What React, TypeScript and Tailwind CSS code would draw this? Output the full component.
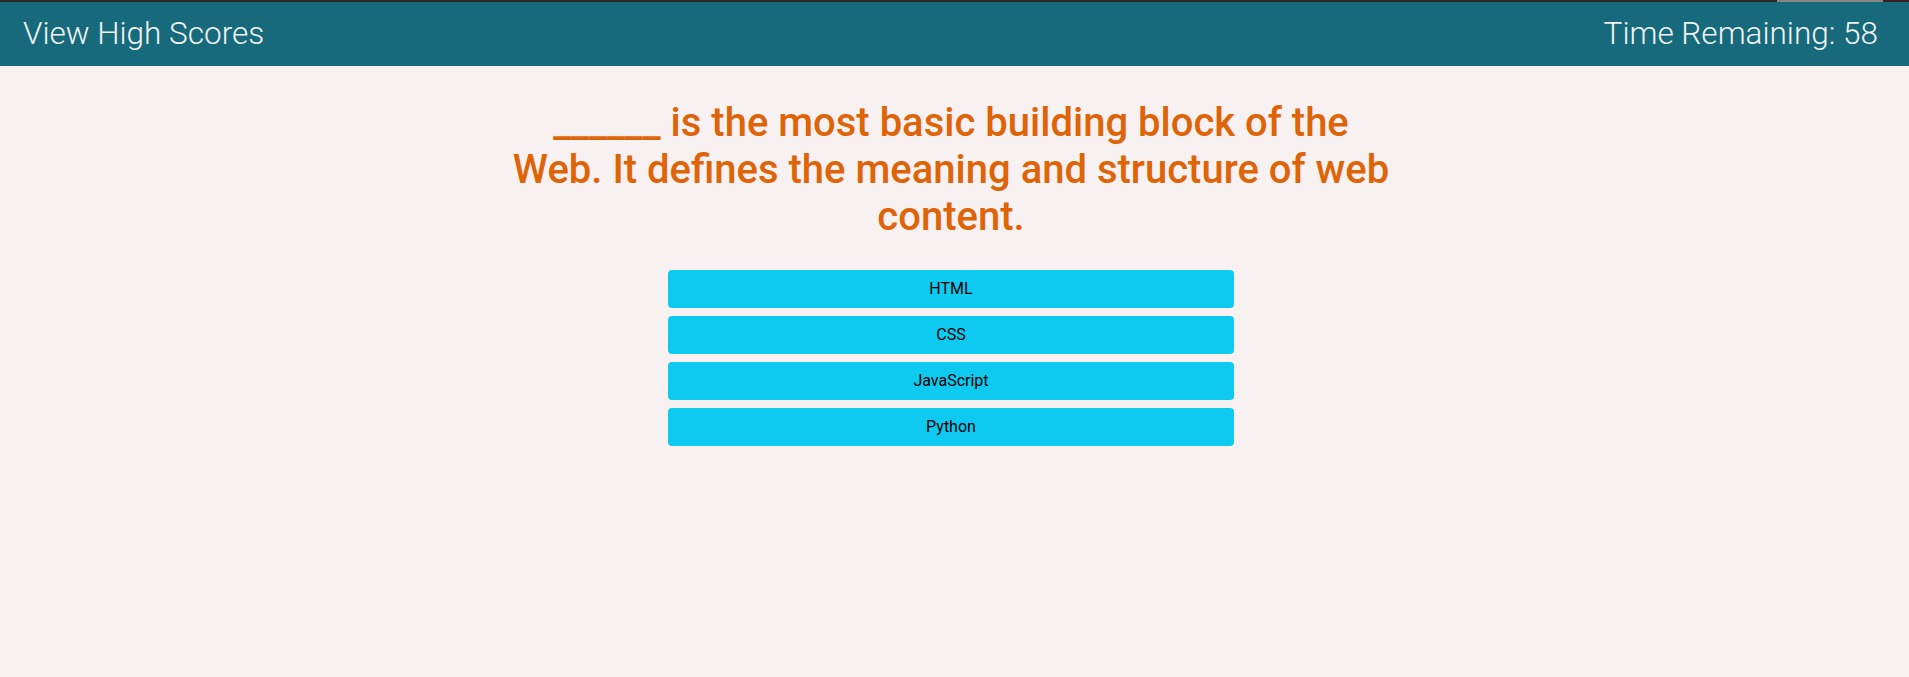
import { useState, useEffect } from "react"

const question = {
  title: "______ is the most basic building block of the Web. It defines the meaning and structure of web content.",
  choices: ["HTML", "CSS", "JavaScript", "Python"],
}

export default function App() {
  const [time, setTime] = useState(58)

  useEffect(() => {
    // timer is frozen for the screenshot
    setTime(58)
  }, [])

  return (
    <div className="min-h-screen bg-[#f7f1f1]" style={{ fontFamily: "Roboto, 'Liberation Sans', sans-serif" }}>
      <div className="flex h-[2px] bg-[#2e2a2b]">
        <div className="flex-1" />
        <div className="w-[106px] bg-[#8a8686]" />
        <div className="w-[26px] bg-[#3a2024]" />
      </div>
      <header className="flex h-16 items-center justify-between bg-[#176a7b] pl-[23px] pr-[31px] text-[31.5px] font-light text-[#f2f2f2]">
        <a className="cursor-pointer">View High Scores</a>
        <p>Time Remaining: {time}</p>
      </header>

      <main className="flex flex-col items-center pr-[7px]">
        <h1 className="mt-[33px] w-[885px] text-center text-[40px] font-medium leading-[47px] text-[#df6307]">
          {question.title}
        </h1>
        <div className="mt-[30px] flex w-[566px] flex-col gap-2">
          {question.choices.map((choice) => (
            <button
              key={choice}
              className="h-[38px] w-full rounded bg-[#0ecaf0] text-base text-black"
            >
              {choice}
            </button>
          ))}
        </div>
      </main>
    </div>
  )
}
